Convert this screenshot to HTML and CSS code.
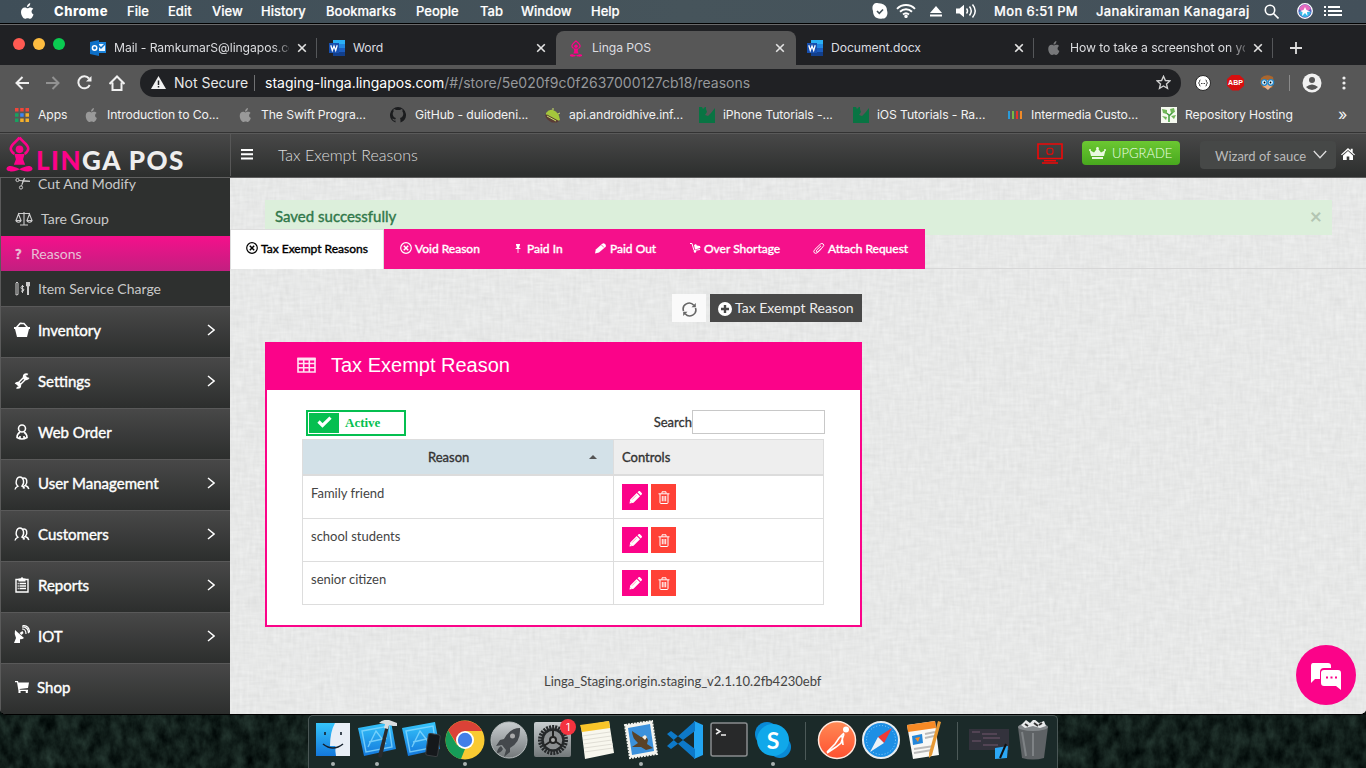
FILE: index.html
```html
<!DOCTYPE html>
<html lang="en">
<head>
<meta charset="utf-8">
<title>Linga POS</title>
<link rel="stylesheet" href="styles.css">
</head>
<body>
<svg class="defs" width="0" height="0">
  <defs>
    <symbol id="apple" viewBox="0 0 14 17"><path d="M9.900 0c.1 1.400-.4 2.500-1.100 3.200-.7.800-1.700 1.200-2.400 1.100-.1-1.200.4-2.200 1.100-2.900C8.200.6 9.200.1 9.900 0zM13.500 12.200c-.8 2.300-2.200 4.700-3.700 4.700-1 0-1.500-.6-2.700-.6s-1.800.6-2.700.6C2.400 16.900 0 13 0 9.600 0 6.500 2 4.700 4 4.700c1.200 0 2.200.8 3 .8.700 0 1.900-.9 3.400-.8 1 .1 2.100.5 2.800 1.500-2.700 1.800-2.200 5 .3 6z"/></symbol>
    <symbol id="close" viewBox="0 0 10 10"><path d="M1.200 1.200l7.600 7.600M8.800 1.200L1.200 8.800" stroke="currentColor" stroke-width="1.600" fill="none"/></symbol>
    <symbol id="word" viewBox="0 0 16 16"><path d="M4 0h12v16H4z" fill="#1a5dbe"/><path d="M4 0h12v4H4z" fill="#2bb0f5"/><path d="M4 4h12v4H4z" fill="#2186e0"/><path d="M4 12h12v4H4z" fill="#123f8c"/><path d="M0 3h10v10H0z" fill="#174fae"/><path d="M1.800 5.300l1.500 5.200L5 6l1.700 4.500 1.500-5.200" stroke="#fff" stroke-width="1.300" fill="none"/></symbol>
    <symbol id="guru" viewBox="0 0 26 35"><path d="M13 1.500C10 6 4.500 7.500 4.500 12.500c0 2 1.500 3.500 3.500 5M13 1.500c3 4.500 8.500 6 8.500 11 0 2-1.500 3.500-3.500 5" fill="none" stroke="currentColor" stroke-width="2.500"/><circle cx="13" cy="13" r="3.700" fill="currentColor"/><path d="M8 17.500h10l-1.500 5 2 5.500h-11l2-5.500z" fill="currentColor"/><path d="M.5 31c2-3.500 7-1.500 12.500 1 5.500-2.500 10.500-4.500 12.500-1 .8 2.700-2 3.500-5 3.500-3.500 0-5-1.200-7.500-2-2.500.8-4 2-7.500 2-3 0-5.800-.8-5-3.500z" fill="currentColor"/></symbol>
    <symbol id="tuts" viewBox="0 0 16 16"><path d="M0 0h3l1 2 2-2h1v2l1 3-2 3 3 1 3-3 4-5v15H0z" fill="#087443"/></symbol>
    <symbol id="chev" viewBox="0 0 8 12"><path d="M1 1l6 5-6 5" fill="none" stroke="#fff" stroke-width="1.500"/></symbol>
    <symbol id="xcircle" viewBox="0 0 12 12"><circle cx="6" cy="6" r="5.300" fill="none" stroke="currentColor" stroke-width="1.200"/><path d="M3.800 3.800l4.400 4.400M8.200 3.800L3.800 8.200" stroke="currentColor" stroke-width="1.500"/></symbol>
    <symbol id="users" viewBox="0 0 16 14"><path d="M1 13.500q.3-2 3-3.300C.5 7.500 2.500 1 6 1s5 6 2 9q2 .8 2.500 2.500" fill="none" stroke="#fff" stroke-width="1.400"/><path d="M9 2.200c4-1.400 5 4.500 2.300 7.300q3 1 3.500 3.500M9.500 12.500q-.5-2 1-3" fill="none" stroke="#fff" stroke-width="1.500"/></symbol>
    <symbol id="pencil" viewBox="0 0 13 13"><path d="M.5 12.500l.7-4L7.700 2l3.300 3.300-6.500 6.500zM8.500 1.300L9.600.3c.5-.4 1-.4 1.400 0l1.700 1.700c.4.400.4 1 0 1.400l-1 1z" fill="#fff"/><path d="M3 8.700l4.500-4.500M1.500 10.500l1 1" stroke="#f8a" stroke-width=".8"/></symbol>
    <symbol id="trash" viewBox="0 0 12 13"><path d="M.5 2.800h11M4 2.500V.8h4v1.700M2 3v8.500q0 1 1 1h6q1 0 1-1V3M4.300 5v5.300M6 5v5.300M7.700 5v5.300" fill="none" stroke="#fff" stroke-width="1"/></symbol>
    <linearGradient id="blue" x2="0" y2="1"><stop stop-color="#35c5fb"/><stop offset="1" stop-color="#1478dc"/></linearGradient>
    <linearGradient id="silver" x2="0" y2="1"><stop stop-color="#c9ced0"/><stop offset="1" stop-color="#73787a"/></linearGradient>
    <linearGradient id="orange" x2="0" y2="1"><stop stop-color="#ff8a55"/><stop offset="1" stop-color="#ff5030"/></linearGradient>
    <symbol id="blueprint" viewBox="0 0 40 40"><path d="M1 8l33-6 5 27-32 7z" fill="url(#blue)"/><path d="M5 11l27-5 3 21-26 5zM11 27l8-16 10 13M12 22l18-4" fill="none" stroke="#8edcff" stroke-width="1.400" opacity=".75"/></symbol>
    <filter id="linen" x="0" y="0" width="100%" height="100%" color-interpolation-filters="sRGB"><feTurbulence type="fractalNoise" baseFrequency="0.3 0.06" numOctaves="2" seed="3" result="a"/><feTurbulence type="fractalNoise" baseFrequency="0.06 0.3" numOctaves="2" seed="8" result="b"/><feComposite in="a" in2="b" operator="arithmetic" k2=".5" k3=".5"/><feColorMatrix values=".1 0 0 0 .855  .1 0 0 0 .859  .1 0 0 0 .857  0 0 0 0 1"/></filter>
    <filter id="forest" x="0" y="0" width="100%" height="100%" color-interpolation-filters="sRGB"><feTurbulence type="fractalNoise" baseFrequency="0.09 0.06" numOctaves="4" seed="12"/><feColorMatrix values=".2 0 0 0 -.03  .26 0 0 0 -.01  .23 0 0 0 -.01  0 0 0 0 1"/></filter>
  </defs>
</svg>

<header class="menubar">
  <svg class="m-apple" width="13" height="16" fill="#fff"><use href="#apple"/></svg>
  <b>Chrome</b><span>File</span><span>Edit</span><span>View</span><span>History</span><span>Bookmarks</span><span>People</span><span>Tab</span><span>Window</span><span>Help</span>
  <svg width="16" height="16" viewBox="0 0 16 16"><path d="M4 0c2-.2 3 .5 5 .6C13 1.500 15 4 15 7.500c1.500 4-1 8.500-4.500 8C4 16.500 1 13 1 8-.5 4 1 .5 4 0z" fill="#fff"/><path d="M5 8l2.300 2.300L11 6.500" fill="none" stroke="#44525a" stroke-width="1.600"/></svg>
  <svg width="20" height="14" viewBox="0 0 20 14" fill="none" stroke="#fff" stroke-width="1.900"><path d="M1 4.800C6-.2 14-.2 19 4.800M4 7.800c3.500-3.400 8.500-3.400 12 0M7 10.500c2-1.700 4-1.700 6 0"/><circle cx="10" cy="12.300" r=".8" fill="#fff"/></svg>
  <svg width="12" height="11" viewBox="0 0 12 11" fill="#fff"><path d="M6 0l6 7H0zM0 8.500h12v2H0z"/></svg>
  <svg width="21" height="14" viewBox="0 0 21 14"><path d="M0 4.500h3.500L8 .8v12.400L3.500 9.500H0z" fill="#fff"/><path d="M10.500 4.500q2 2.500 0 5M13.500 2.500q3.500 4.500 0 9M16.500 .5q5.500 6.500 0 13" fill="none" stroke="#fff" stroke-width="1.500"/></svg>
  <span class="clock">Mon 6:51 PM</span><span class="user">Janakiraman Kanagaraj</span>
  <svg width="15" height="15" viewBox="0 0 15 15" fill="none" stroke="#fff" stroke-width="1.600"><circle cx="6" cy="6" r="4.700"/><path d="M9.500 9.500l5 5"/></svg>
  <svg width="16" height="16" viewBox="0 0 16 16"><circle cx="8" cy="8" r="7.300" fill="#5560b8" stroke="#fff" stroke-width="1.300"/><path d="M2 6q2-4.500 6-4.500T14 6l-4 2H5z" fill="#e66abf"/><path d="M2 9l5-1 7 1q-2 5-6 5t-6-5z" fill="#35b9e8"/><path d="M8 4l1.500 3 4 1.500-3.500.5.500 4L8 10l-3 3 .5-4L3 8l3.500-1z" fill="#fff"/></svg>
  <svg width="19" height="12" viewBox="0 0 19 12" fill="#fff"><path d="M0 1h2v2H0zM0 5h2v2H0zM0 9h2v2H0zM4 1h12v2H4zM4 5h14v2H4zM4 9h14v2H4z"/></svg>
</header>

<div class="window">
  <nav class="tabstrip">
    <div class="lights"><i class="red"></i><i class="yellow"></i><i class="green"></i></div>
    <div class="btab sep"><svg width="16" height="16" viewBox="0 0 16 16"><path d="M7 2h9v11H7z" fill="#1b83da"/><path d="M8 4h7v7H8z" fill="#e8f4ff"/><path d="M8 5l3 3 5-5" stroke="#1272c8" stroke-width="1.500" fill="none"/><path d="M0 2l9-2v16l-9-2z" fill="#0e70c8"/><circle cx="4.600" cy="8" r="2.200" fill="none" stroke="#fff" stroke-width="1.500"/></svg><span class="fade">Mail - RamkumarS@lingapos.co</span><svg class="x"><use href="#close"/></svg></div>
    <div class="btab"><svg width="16" height="16"><use href="#word"/></svg><span>Word</span><svg class="x"><use href="#close"/></svg></div>
    <div class="btab on"><svg class="pink" width="16" height="17"><use href="#guru"/></svg><span>Linga POS</span><svg class="x"><use href="#close"/></svg></div>
    <div class="btab sep"><svg width="16" height="16"><use href="#word"/></svg><span>Document.docx</span><svg class="x"><use href="#close"/></svg></div>
    <div class="btab sep"><svg width="16" height="14" fill="#77787a"><use href="#apple"/></svg><span class="fade">How to take a screenshot on yo</span><svg class="x"><use href="#close"/></svg></div>
    <svg class="plus" width="12" height="12" viewBox="0 0 12 12"><path d="M6 0v12M0 6h12" stroke="#e0e0e0" stroke-width="1.800"/></svg>
  </nav>

  <div class="toolbar">
    <svg width="14" height="14" viewBox="0 0 14 14" class="ln"><path d="M14 7H1.500M7.500 1L1.500 7l6 6"/></svg>
    <svg width="14" height="14" viewBox="0 0 14 14" class="ln dim"><path d="M0 7h12.500M6.500 1l6 6-6 6"/></svg>
    <svg width="15" height="15" viewBox="0 0 15 15" class="ln"><path d="M12.700 10A6 6 0 1 1 12 3.500"/><path d="M14.500 1v5.500H9z" fill="#f0f0f0" stroke="none"/></svg>
    <svg width="16" height="16" viewBox="0 0 16 16" class="ln"><path d="M.5 9L8 1.500 15.500 9M3.500 7.500V15h9V7.500"/></svg>
    <div class="omnibox">
      <svg width="15" height="13" viewBox="0 0 15 13"><path d="M7.500 0L15 13H0z" fill="#f1f1f1"/><path d="M7.500 4.500V9M7.500 10v1.500" stroke="#202124" stroke-width="1.500"/></svg>
      <span class="ns">Not Secure</span><i></i><span class="url"><em>staging-linga.lingapos.com</em>/#/store/5e020f9c0f2637000127cb18/reasons</span>
      <svg class="star" width="15" height="15" viewBox="0 0 15 15"><path d="M7.500 1.300l1.900 4.200 4.500.4-3.400 3 1 4.500-4-2.400-4 2.400 1-4.500-3.400-3 4.500-.4z" fill="none" stroke="#d0d0d0" stroke-width="1.400"/></svg>
    </div>
    <div class="exts">
    <svg width="16" height="16" viewBox="0 0 16 16"><circle cx="8" cy="8" r="7.500" fill="#fff" stroke="#292929"/><path d="M5.500 5Q4 5 4.500 6.800L3.500 8l1 1.200Q4 11 5.500 11M10.500 5q1.500 0 1 1.800l1 1.200-1 1.200q.5 1.800-1 1.800M6 8.500h1M7.500 8.500h1M9 8.500h1" fill="none" stroke="#444"/></svg>
    <div class="abp">ABP</div>
    <svg width="15" height="15" viewBox="0 0 15 15"><path d="M1 3q5-5 12-1l1 6-2 5H3L0 8z" fill="#a9662e"/><path d="M3 5h9v6l-4 4-5-4z" fill="#eab28b"/><circle cx="4.200" cy="7.500" r="2.800" fill="#dff4ff" stroke="#2387cb" stroke-width="1.300"/><circle cx="10.800" cy="7.500" r="2.800" fill="#dff4ff" stroke="#2387cb" stroke-width="1.300"/><circle cx="4.500" cy="7.500" r=".9"/><circle cx="10.500" cy="7.500" r=".9"/></svg>
    <i class="vsep"></i>
    <svg width="20" height="20" viewBox="0 0 20 20"><circle cx="10" cy="10" r="9.500" fill="#f1f1f1"/><circle cx="10" cy="7" r="3" fill="#575757"/><path d="M4 14q6-5 12 0-2.500 3-6 3t-6-3z" fill="#575757"/></svg>
    <svg class="dots" width="4" height="14" viewBox="0 0 4 14" fill="#eee"><circle cx="2" cy="2" r="1.600"/><circle cx="2" cy="7" r="1.600"/><circle cx="2" cy="12" r="1.600"/></svg>
    </div>
  </div>

  <div class="bookmarks">
    <svg width="14" height="14" viewBox="0 0 14 14"><path d="M0 0h3.500v3.500H0zM5.200 0h3.500v3.500H5.200zM10.500 0H14v3.500h-3.500z" fill="#f2463a"/><path d="M0 5.200h3.500v3.500H0zM0 10.500h3.500V14H0z" fill="#18a260"/><path d="M5.200 5.200h3.500v3.500H5.200z" fill="#3e86f5"/><path d="M10.500 5.200H14v3.500h-3.500zM5.200 10.500h3.500V14H5.200zM10.500 10.500H14V14h-3.500z" fill="#f5b02a"/></svg><span>Apps</span>
    <svg width="13" height="14" fill="#999"><use href="#apple"/></svg><span>Introduction to Co...</span>
    <svg width="13" height="14" fill="#999"><use href="#apple"/></svg><span>The Swift Progra...</span>
    <svg width="16" height="16" viewBox="0 0 16 16"><path d="M8 0a8 8 0 0 0-2.500 15.600v-2c-2 .5-2.500-1-3.500-1.800 1.500-.3 1.800 1 3.500.5q0-1 .5-1.300C2.500 10.500 2 6 3.600 4.500q-.3-1.500.2-2.500Q5 2 6 3h4q1-1 2.200-1 .5 1 .2 2.500C14 6 13.500 10.500 10 11q.5.500.5 4.600A8 8 0 0 0 8 0z" fill="#1b1c1e"/></svg><span>GitHub - duliodeni...</span>
    <svg width="16" height="16" viewBox="0 0 16 16"><path d="M1 6Q4 2 8 3q6 2 7 10l-2 1L1 8z" fill="#a4c63c"/><path d="M0 8l2-.5L14 14l-2 1.500H7Q1 13 0 8z" fill="#5a3c35"/><path d="M8 3V1M13 7l2-1M2 9l9 5" stroke="#cde36b"/></svg><span>api.androidhive.inf...</span>
    <svg width="16" height="16"><use href="#tuts"/></svg><span>iPhone Tutorials -...</span>
    <svg width="16" height="16"><use href="#tuts"/></svg><span>iOS Tutorials - Ra...</span>
    <svg width="14" height="8" viewBox="0 0 14 8"><path d="M0 0h2v8H0z" fill="#2b9bd8"/><path d="M4 0h2v8H4z" fill="#78b943"/><path d="M8 0h2v8H8z" fill="#e63329"/><path d="M12 0h2v8h-2z" fill="#f08a28"/></svg><span>Intermedia Custo...</span>
    <svg width="16" height="16" viewBox="0 0 16 16"><path d="M0 0h16v16H0z" fill="#f5f9ef"/><path d="M8 15V8L4 5M8 9l5-5" stroke="#3f9a3a" stroke-width="1.500" fill="none"/><path d="M1 2l5 1v4L2 6zM9 2l4-1 1 4-4 1zM1 9l5 1-1 3zM10 9l5-1-2 4z" fill="#71b658"/></svg><span>Repository Hosting</span>
    <span class="more">»</span>
  </div>

  <div class="apphead">
    <div class="brand"><svg class="pink" width="27" height="36"><use href="#guru"/></svg><span class="name"><b>LIN</b>GA POS</span></div>
    <svg class="burger" width="12" height="11" viewBox="0 0 12 11" fill="#fff"><path d="M0 0h12v2H0zM0 4.300h12v2H0zM0 8.600h12v2H0z"/></svg>
    <h1>Tax Exempt Reasons</h1>
    <svg class="monitor" width="26" height="21" viewBox="0 0 26 21" fill="none" stroke="#f00808" stroke-width="1.600"><path d="M1 1h24v14.500H1zM5 20h16M7 17.700h12"/><rect x="10" y="5.200" width="6" height="6" rx="2" stroke-width="1.100"/></svg>
    <div class="upgrade"><svg width="17" height="12" viewBox="0 0 17 12" fill="#eafadf"><path d="M2 9L.5 3 5 5.500 8.500 1 12 5.500 16.500 3 15 9zM3 10h11v2H3z"/><circle cx="8.500" cy="1.300" r="1.300"/><circle cx="1" cy="3" r="1"/><circle cx="16" cy="3" r="1"/></svg><span>UPGRADE</span></div>
    <div class="store"><span>Wizard of sauce</span><svg width="14" height="9" viewBox="0 0 14 9"><path d="M.8 1L7 7.800 13.200 1" fill="none" stroke="#ddd" stroke-width="1.300"/></svg></div>
    <svg class="home" width="14" height="12" viewBox="0 0 14 12" fill="#fff"><path d="M7 0l2.700 2.500V.8h2v3.600L14 6.500l-.8.800L7 1.900.8 7.300 0 6.500zM7 3l5 4.400V12H8.300V8.500H5.700V12H2V7.400z"/></svg>
  </div>

  <div class="body">
    <aside>
      <div class="sub cut"><svg width="15" height="13" viewBox="0 0 15 13" fill="none" stroke="#ccc"><circle cx="2.500" cy="3" r="1.600"/><circle cx="6" cy="10.500" r="1.600"/><path d="M4 3.500l11 .8-8-.3M6.500 9L9.500 1 7 7"/></svg><span>Cut And Modify</span></div>
      <div class="sub tare"><svg width="18" height="15" viewBox="0 0 18 15" fill="none" stroke="#ccc" stroke-width="1.100"><path d="M9 1v13M5 14h8M3 2.500h12M3.500 3L1 9.500h5zM14.500 3L12 9.500h5zM1 10q2.500 2.500 5 0M12 10q2.500 2.500 5 0"/></svg><span>Tare Group</span></div>
      <div class="sub sel"><strong>?</strong><span>Reasons</span></div>
      <div class="sub svc"><svg width="15" height="15" viewBox="0 0 15 15" fill="none" stroke="#ccc"><path d="M1 14V2q1-2 2 0v11.500zM11.500 1v4h3V1M13 1v13" /><path d="M11 1h4v4h-4zM12 5h2v9h-2z" fill="#ccc" stroke="none"/><path d="M9 5.500Q6 4.500 6 6.500t2 1.500 0 2.500l-2-.5M7.500 4v8"/></svg><span>Item Service Charge</span></div>
      <div class="grp"><svg width="16" height="15" viewBox="0 0 16 15"><path d="M0 5h16v2h-1l-2 8H3L1 7H0z" fill="#fff"/><path d="M2.500 5.500L6 1.500h4l3.500 4M6 1.500L7.500 1" fill="none" stroke="#fff" stroke-width="1.500"/></svg><span>Inventory</span><svg class="chev"><use href="#chev"/></svg></div>
      <div class="grp"><svg width="16" height="16" viewBox="0 0 16 16"><path d="M3.500 12.500l9-9" stroke="#fff" stroke-width="4"/><path d="M5 11l6-6" stroke="#3a3b3b" stroke-width="1.200"/><circle cx="3.700" cy="12.300" r="2.500" fill="none" stroke="#fff" stroke-width="2" stroke-dasharray="12 4" stroke-dashoffset="-9"/><circle cx="12.300" cy="3.700" r="2.500" fill="none" stroke="#fff" stroke-width="2" stroke-dasharray="12 4" stroke-dashoffset="-1"/></svg><span>Settings</span><svg class="chev"><use href="#chev"/></svg></div>
      <div class="grp"><svg width="16" height="16" viewBox="0 0 16 16" fill="none" stroke="#fff" stroke-width="1.600"><circle cx="8" cy="4.500" r="3.500"/><path d="M6 8Q3 10 3 13.500q5 3 10 0Q13 10 10 8M6 15v-3M10 15v-3"/></svg><span>Web Order</span></div>
      <div class="grp"><svg width="16" height="14"><use href="#users"/></svg><span>User Management</span><svg class="chev"><use href="#chev"/></svg></div>
      <div class="grp"><svg width="16" height="14"><use href="#users"/></svg><span>Customers</span><svg class="chev"><use href="#chev"/></svg></div>
      <div class="grp"><svg width="16" height="16" viewBox="0 0 16 16"><path d="M2 2.500h12V15H2zM5.500 6.500H12M5.500 9H12M5.500 11.500H12M3.700 6.500h1M3.700 9h1M3.700 11.500h1" fill="none" stroke="#fff" stroke-width="1.400"/><path d="M4.500 1.500h2Q8-1 9.500 1.500h2v3h-7z" fill="#fff"/></svg><span>Reports</span><svg class="chev"><use href="#chev"/></svg></div>
      <div class="grp iot"><svg width="16" height="18" viewBox="0 0 16 18"><path d="M1 5l9 8q-2 1.500-4 1.200V18H0l2-5Q0 9 1 5zM5.500 8l3-2 1 2-2 2z" fill="#fff"/><path d="M8 4q4 0 4 5M8 1.800q6.500 0 6.500 6.500M8.500.5q7 0 7 7" fill="none" stroke="#fff" stroke-width="1.200"/></svg><span>IOT</span><svg class="chev"><use href="#chev"/></svg></div>
      <div class="grp shop"><svg width="14" height="12" viewBox="0 0 14 12" fill="#fff"><path d="M0 0h3l.4 1.500H14L13 7 4.500 8l.3.8H13V10H3.500L2 1.200H0z"/><circle cx="4.500" cy="11" r="1.200"/><circle cx="11.800" cy="11" r="1.200"/></svg><span>Shop</span></div>
    </aside>

    <main>
      <svg class="texture"><rect width="100%" height="100%" filter="url(#linen)"/></svg>
      <div class="content">
        <div class="alert"><span>Saved successfully</span><b>×</b></div>
        <div class="tabs">
          <div class="tab active"><svg width="12" height="12"><use href="#xcircle"/></svg><span>Tax Exempt Reasons</span></div>
          <div class="tab"><svg width="12" height="12"><use href="#xcircle"/></svg><span>Void Reason</span></div>
          <div class="tab pin"><svg width="6" height="9" viewBox="0 0 6 9" fill="#fff"><path d="M1 0h4v1L4 3.500l1.500 1V5h-5v-.5L2 3.500 1 1zM2.600 5h.8v4h-.8z"/></svg><span>Paid In</span></div>
          <div class="tab out"><svg width="11" height="11" viewBox="0 0 11 11"><path d="M0 10.500l.8-4L7 1q1.500-1.300 3 0t.5 3L4 9.500z" fill="#fff"/><path d="M6.500 2L9 4.500" stroke="#f5108b" stroke-width=".7"/></svg><span>Paid Out</span></div>
          <div class="tab over"><svg width="11" height="10" viewBox="0 0 11 10"><path d="M0 .5h2l2 7 6-1" stroke="#fff" fill="none"/><path d="M4 2l2-1 .8 1.500L10 3l.5 2-5.500 1.500z" fill="#fff"/><circle cx="5" cy="8.500" r="1.200" fill="#fff"/></svg><span>Over Shortage</span></div>
          <div class="tab clip"><svg width="12" height="11" viewBox="0 0 12 11"><path d="M8 2.800L3.600 7.200q-.8 1 0 1.500t1.500-.2L10 3.800q1.500-1.500.2-2.800t-2.900.2L1.800 6.500q-1.800 2-.5 3.300t3.400-.4L8.500 5.800" fill="none" stroke="#fff" stroke-width="1"/></svg><span>Attach Request</span></div>
        </div>
        <div class="actions">
          <div class="refresh"><svg width="15" height="15" viewBox="0 0 15 15"><path d="M1.500 9A6 6 0 0 1 11.800 3.300M13.500 6A6 6 0 0 1 3.200 11.700" fill="none" stroke="#666" stroke-width="1.600"/><path d="M13.800 1v4.300H9.500zM1.200 14V9.700h4.300z" fill="#666"/></svg></div>
          <div class="add"><svg width="14" height="14" viewBox="0 0 14 14"><circle cx="7" cy="7" r="7" fill="#fff"/><path d="M7 3v8M3 7h8" stroke="#484848" stroke-width="2.400"/></svg><span>Tax Exempt Reason</span></div>
        </div>
        <section class="panel">
          <h2><svg width="19" height="16" viewBox="0 0 19 16"><path d="M1 1.500h17v13.500H1zM1 6.500h17M1 10.700h17M6.700 3v12M12.300 3v12" fill="none" stroke="#ffe3f2" stroke-width="1.600"/><path d="M.5 .7h18v2.800H.5z" fill="#ffe3f2"/></svg><span>Tax Exempt Reason</span></h2>
          <div class="tools">
            <div class="toggle"><div><svg width="15" height="12" viewBox="0 0 15 12"><path d="M1.500 5.500l4 4L13.500 1.700" fill="none" stroke="#fff" stroke-width="3.200"/></svg></div><span>Active</span></div>
            <div class="search"><label>Search</label><div class="box"></div></div>
          </div>
          <div class="table">
            <div class="th reason"><span>Reason</span><svg width="8" height="4" viewBox="0 0 8 4"><path d="M4 0l4 4H0z" fill="#555"/></svg></div><div class="th ctl">Controls</div>
            <div class="td">Family friend</div><div class="td btns"><i class="ed"><svg width="13" height="13"><use href="#pencil"/></svg></i><i class="del"><svg width="12" height="13"><use href="#trash"/></svg></i></div>
            <div class="td">school students</div><div class="td btns"><i class="ed"><svg width="13" height="13"><use href="#pencil"/></svg></i><i class="del"><svg width="12" height="13"><use href="#trash"/></svg></i></div>
            <div class="td">senior citizen</div><div class="td btns"><i class="ed"><svg width="13" height="13"><use href="#pencil"/></svg></i><i class="del"><svg width="12" height="13"><use href="#trash"/></svg></i></div>
          </div>
        </section>
        <footer><span>Linga_Staging.origin.staging_v2.1.10.2fb4230ebf</span></footer>
      </div>
      <div class="chat"><svg width="32" height="28" viewBox="0 0 32 28"><path d="M3 0h15q3 0 3 3v2h-7q-4 0-4 4v7H5l-4 4V3q0-3 2-3z" fill="#fff"/><path d="M14 7h14q3 0 3 3v17l-5-4H14q-3 0-3-3V10q0-3 3-3z" fill="#fff"/><path d="M16 14.500h2M20.500 14.500h2M25 14.500h2" stroke="#fb0389" stroke-width="2"/></svg></div>
    </main>
  </div>
</div>

<div class="desktop">
  <svg class="texture"><rect width="100%" height="100%" filter="url(#forest)"/></svg>
  <div class="dock">
    <div class="app run"><svg viewBox="0 0 40 40"><path d="M3 3h34v33H3z" fill="url(#blue)"/><path d="M22 3h15v33H23q-1-5-.5-10H17q0-14 5-23z" fill="#e8eef6"/><path d="M12 12v3M28 12v3M10 24q10 8 20 0" fill="none" stroke="#14202c" stroke-width="1.600"/></svg></div>
    <div class="app run"><svg viewBox="0 0 40 40"><use href="#blueprint"/><path d="M29 5l3 1-7 31q-2 2-4-1z" fill="#2a2c2e"/><path d="M22 3q4-4 10-3l8 3v3h-4l-4-1-1 4-4-1 1-4z" fill="#d9dddf"/></svg></div>
    <div class="app"><svg viewBox="0 0 40 40"><use href="#blueprint"/><rect x="26" y="14" width="12" height="22" rx="2" transform="rotate(8 32 25)" fill="#15181b" stroke="#3b3e42"/></svg></div>
    <div class="app run"><svg viewBox="0 0 40 40"><circle cx="20" cy="20" r="19.500" fill="#f9ca32"/><path d="M3.100 10.300A19.500 19.500 0 0 1 37 11H20l-8 13z" fill="#db4237"/><path d="M3.100 10.300L12 25l8 4-4 10.100A19.500 19.500 0 0 1 3.100 10.300z" fill="#169c58"/><circle cx="20" cy="20" r="9" fill="#fff"/><circle cx="20" cy="20" r="7.200" fill="#427fe8"/></svg></div>
    <div class="app"><svg viewBox="0 0 40 40"><circle cx="20" cy="20" r="18" fill="url(#silver)" stroke="#b5babb"/><path d="M31 8q-10 0-16 11l-4 1-4 6 6-1 4 5-2 7 6-5v-4Q32 22 31 8z" fill="#44484c"/><circle cx="23.500" cy="16" r="2.500" fill="#aaa"/><path d="M12 26q-4 3-4 7 4 0 6-4z" fill="#44484c"/></svg></div>
    <div class="app settings"><svg viewBox="0 0 40 40"><rect x="1" y="2" width="37" height="35" rx="2" fill="url(#silver)"/><circle cx="20" cy="20" r="13" fill="#8b8e90" stroke="#25282a" stroke-width="4" stroke-dasharray="2 1"/><circle cx="20" cy="20" r="10.500" fill="none" stroke="#25282a" stroke-width="2.500"/><circle cx="20" cy="20" r="3" fill="#aaa" stroke="#222" stroke-width="2"/><path d="M20 17V10M22.500 21.500l6 4M17.500 21.500l-6 4" stroke="#222" stroke-width="2"/></svg><b>1</b></div>
    <div class="app"><svg viewBox="0 0 40 40"><path d="M4 6l28-5 5 32-29 6z" fill="#f8f7ee"/><path d="M3 5l29-4 1 7-28 4z" fill="#f9c529"/><path d="M5 16l28-4M6 20l28-4M6 24l29-4M7 28l29-4M7 32l29-4" stroke="#e0ded5"/></svg></div>
    <div class="app run"><svg viewBox="0 0 40 40"><path d="M4 5l27-4 5 33-27 4z" fill="#f4f4ef" stroke="#f4f4ef" stroke-width="2" stroke-dasharray="2 1"/><path d="M7 8l22-4 4 27-22 4z" fill="#3b91dc"/><path d="M11 11l9 6 5-1 2 4-1 4 6 4-7 2-5-3-9 0 6-4q-6-5-6-12z" fill="#5a4228"/><path d="M21 17l3-2 2 2-2 3z" fill="#f5eee0"/></svg></div>
    <div class="app"><svg viewBox="0 0 40 40"><path d="M29 1l9 4v30l-9 4V1z" fill="#22a6f2"/><path d="M2 14l4-3 24 18v10zM2 26l4 3 24-18V1z" fill="#0d79c8"/></svg></div>
    <div class="app"><svg viewBox="0 0 40 40"><rect x="2" y="3" width="36" height="33" rx="2" fill="#28292a" stroke="#898c8e" stroke-width="1.500"/><path d="M7 9l4 2.500L7 14M12 15h5" fill="none" stroke="#eee" stroke-width="1.500"/></svg></div>
    <div class="app run"><svg viewBox="0 0 40 40"><circle cx="14" cy="14" r="12" fill="#0989d5"/><circle cx="27" cy="27" r="11" fill="#0989d5"/><circle cx="20" cy="20" r="16" fill="#10a8ea"/></svg><strong>S</strong></div>
    <i class="dsep"></i>
    <div class="app"><svg viewBox="0 0 40 40"><circle cx="20" cy="20" r="18.500" fill="url(#orange)" stroke="#ffe9df" stroke-width="1.500"/><circle cx="29" cy="9.500" r="3" fill="#fff"/><path d="M27 13l-5 5-4 6-8 8M27 14l-3 9-5 4-9 6M25 16l1 9" fill="none" stroke="#fff" stroke-width="1.600"/></svg></div>
    <div class="app"><svg viewBox="0 0 40 40"><circle cx="20" cy="20" r="18" fill="#1d8fe5" stroke="#e8ecef" stroke-width="2"/><circle cx="20" cy="20" r="14.500" fill="none" stroke="#8ad0ff" stroke-dasharray="1 2"/><path d="M31 8L23 23l-6-6z" fill="#ef3937"/><path d="M9 32l8-15 6 6z" fill="#edf2f7"/></svg></div>
    <div class="app"><svg viewBox="0 0 40 40"><path d="M2 5l28-4 4 34-26 4z" fill="#f8f8f6"/><path d="M2 5l28-4 1 7-28 4z" fill="#f78a25"/><path d="M7 16l10-2 1 9-10 2z" fill="#2386d9"/><path d="M10 18l5-1-2 5z" fill="#f78a25"/><path d="M20 14l10-2M20 18l9-2M9 29l20-3M9 33l18-3" stroke="#bbb" stroke-width="2"/><path d="M33 1l3 1-9 33-3 3v-5z" fill="#e79935"/></svg></div>
    <i class="dsep"></i>
    <div class="app"><svg viewBox="0 0 40 40"><path d="M0 9h40v21H0z" fill="#33323c"/><path d="M3 12h8M13 14h15M14 18h17M3 21h9M14 25h15" stroke="#72576c" stroke-width="1"/><path d="M26 28l13-2-1 12-12 1z" fill="#2ca8f5"/><path d="M37 24l-6 14" stroke="#111" stroke-width="2"/></svg></div>
    <div class="app"><svg viewBox="0 0 40 40"><path d="M5 7h30l-4 31q-11 3-22 0z" fill="#5e6265"/><path d="M9 12l4 24M20 13v23" stroke="#7e8285" stroke-width="2"/><ellipse cx="20" cy="7" rx="15" ry="4" fill="#83888b"/><path d="M8 5l5-5 4 3 4-4 5 4 5-2 2 5-6 2-7-2-8 2z" fill="#e8eaeb"/><path d="M12 4l3 2M21 3l4 3M29 3l-3 2" stroke="#333" stroke-width="2"/></svg></div>
  </div>
</div>
</body>
</html>
```
FILE: styles.css
```css
* { box-sizing: border-box; }
body { margin: 0; width: 1366px; height: 768px; overflow: hidden; background: #08110f; font-family: Lato, sans-serif; display: flex; flex-direction: column; }
svg { flex: none; display: block; }
i, em { font-style: normal; }
.defs { position: absolute; }
span { white-space: nowrap; }
.pink { color: #fb0389; }

.menubar { height: 23px; flex: none; display: grid; align-items: center; grid-template-columns: 54px 73px 41px 44px 49px 65px 90px 64px 41px 70px 281px 24px 34px 26px 38px 102px 168px 33px 27px 30px; background: linear-gradient(90deg, #3f4e58, #46545b 50%, #43505a); color: #fff; font: 500 13px Inter, sans-serif; padding-bottom: 1px; }
.menubar .m-apple { margin-left: 21px; }
.menubar b { font-weight: 800; letter-spacing: .5px; }
.menubar span { -webkit-text-stroke: .2px #fff; }
.clock { letter-spacing: .35px; }
.user { letter-spacing: .38px; }

.window { height: 692px; flex: none; border-top: 1px solid #000; border-bottom: 1px solid #000; background: #575757; border-radius: 0 0 6px 6px; overflow: hidden; }
.tabstrip { height: 41px; display: flex; background: #202124; border-top: 1px solid #6a6a6b; font: 12.200px Inter, sans-serif; letter-spacing: -.08px; color: #dcdde0; }
.lights { width: 78px; flex: none; display: flex; gap: 8px; padding: 13px 0 0 13px; }
.lights i { width: 12px; height: 12px; border-radius: 50%; }
.red { background: #ff5a52; } .yellow { background: #fdbc40; } .green { background: #0acb51; }
.btab { width: 239px; flex: none; height: 34px; margin-top: 6px; padding-left: 12px; display: flex; align-items: center; gap: 8px; }
.btab span { width: 175px; flex: none; margin-top: -1px; }
.btab .fade { -webkit-mask-image: linear-gradient(90deg, #000 90%, transparent 105%); mask-image: linear-gradient(90deg, #000 90%, transparent 105%); }
.x { width: 10px; height: 10px; color: #e3e3e3; }
.on { width: 240px; margin-right: -1px; background: #575757; border-radius: 8px 8px 0 0; }
.sep { border-right: 1px solid #55575a; height: 20px; margin-top: 13px; }
.plus { margin: 17px 0 0 17px; }

.toolbar { height: 35px; display: flex; align-items: center; padding-left: 15px; gap: 17px; }
.ln { fill: none; stroke: #f0f0f0; stroke-width: 2; }
.dim { stroke: #929292; }
.omnibox { margin-left: -2px; width: 1041px; height: 28px; border-radius: 14px; background: #202124; display: flex; align-items: center; padding: 0 10px 0 11px; font: 14px Inter, sans-serif; color: #e8e8e8; }
.ns { width: 83px; padding-left: 8px; }
.omnibox i { width: 1px; height: 16px; background: #707173; margin: 0 10px 0 5px; }
.url { color: #96989b; flex: 1; } .url em { color: #fff; }
.exts { display: flex; align-items: center; gap: 16px; margin-left: -3px; }
.exts .vsep { margin: 0 -4px 0 -2px; }
.exts .dots { margin-left: 4px; }
.abp { width: 17px; height: 16px; background: #d70f0f; color: #fff; font: bold 7px/16px "Liberation Sans", sans-serif; text-align: center; clip-path: polygon(30% 0, 70% 0, 100% 30%, 100% 70%, 70% 100%, 30% 100%, 0 70%, 0 30%); }
.vsep { width: 1px; height: 16px; background: #8a8a8a; }
.bookmarks { height: 33px; padding-bottom: 3px; display: grid; align-items: center; padding-left: 15px; grid-template-columns: 23px 47px 22px 132px 22px 129px 25px 130px 24px 130px 24px 130px 24px 131px 23px 130px 24px 153px 20px; font: 12.200px Inter, sans-serif; letter-spacing: -.1px; color: #f2f2f2; border-bottom: 1px solid #333; }
.more { font-size: 16px; line-height: 14px; margin-top: -2px; }

.apphead { height: 45px; display: flex; align-items: flex-start; background: linear-gradient(#484848, #2c2e2d); border-top: 1px solid #5a5a5a; border-bottom: 1px solid #606060; color: #ccc; }
.brand { width: 231px; height: 42px; border-right: 1px solid #575757; display: flex; padding: 2px 0 0 6px; }
.name { font: 900 26px/28px Lato, sans-serif; letter-spacing: 1.500px; color: #eee; padding: 10px 0 0 3px; }
.name b { color: #fb0389; font-weight: 900; }
.burger { margin: 15px 0 0 10px; }
.apphead h1 { margin: 11px 0 0 25px; width: 759px; font: 300 16px/20px Lato, sans-serif; color: #dcdcdc; }
.monitor { margin-top: 9px; }
.upgrade { margin: 7px 0 0 19px; width: 98px; height: 24px; border-radius: 4px; background: linear-gradient(#6cc832, #48a81e); display: flex; align-items: center; gap: 6px; padding-left: 7px; font-size: 13px; font-weight: 300; color: #efffe6; }
.store { margin: 7px 0 0 20px; width: 136px; height: 28px; background: #464847; border-radius: 4px; display: flex; align-items: center; justify-content: space-between; padding: 0 9px 2px 15px; font-size: 13px; color: #bbb; }
.store span { padding-top: 3px; }
.home { margin: 14px 0 0 5px; }

.body { display: flex; height: 537px; }
aside { width: 230px; background: #2e302f; border-left: 1px solid #5a5a5a; display: flex; flex-direction: column; flex: none; color: #c9c9c9; overflow: hidden; }
.sub { height: 35px; flex: none; display: flex; align-items: center; font-size: 14px; padding-left: 14px; gap: 8px; }
.cut { height: 23px; padding-bottom: 12px; line-height: 11px; }
.sel { gap: 8px; background: linear-gradient(#f5108b, #c21f80); margin-left: -1px; padding-left: 15px; color: #e8c0d6; }
.sel strong { font-weight: 900; -webkit-text-stroke: .4px; width: 8px; }
.grp { height: 51px; flex: none; border-top: 1px solid #595959; background: linear-gradient(#484848, #2c2e2d); display: flex; align-items: center; padding: 0 15px 4px 13px; gap: 8px; color: #fff; font-size: 15px; -webkit-text-stroke: .4px #fff; }
.grp svg { margin-top: -1px; }
.grp .chev { width: 8px; height: 12px; margin-left: auto; margin-top: 0; }
.grp.iot svg:first-child { margin-top: -5px; }
.shop { gap: 8px; padding-left: 14px; }

main { width: 1136px; position: relative; background: #e6e7e6; overflow: hidden; }
.texture { position: absolute; inset: 0; width: 100%; height: 100%; }
.content { position: relative; }
.alert { margin: 22px 34px 0 35px; height: 35px; background: #dcefdb; color: #31784a; display: flex; justify-content: space-between; padding: 7px 10px 0 10px; font-size: 15px; line-height: 18px; -webkit-text-stroke: .4px #31784a; }
.alert b { font: 700 21px/17px Lato, sans-serif; color: #b3c5b2; -webkit-text-stroke: 0; }
.tabs { margin-top: -6px; position: relative; display: grid; grid-template-columns: 154px 115px 80px 95px 123px 128px; height: 40px; background: linear-gradient(#f5108b, #f5108b) 0 0 / 695px 40px no-repeat; color: #fff; font-size: 12px; }
.tabs::after { content: ""; position: absolute; left: 695px; right: 0; bottom: 0; height: 1px; background: #d7d7d7; }
.tab { display: flex; align-items: center; gap: 3px; padding: 0 0 1px 16px; -webkit-text-stroke: .4px currentColor; }
.tab svg { margin-top: -1px; }
.active { background: #fff; color: #000; border: 1px solid #ddd; padding: 0 0 2px 15px; border-bottom: 0; }
.pin { gap: 6px; } .out { gap: 4px; }
.actions { display: flex; margin: 25px 0 0 442px; gap: 4px; height: 28px; }
.refresh { width: 34px; background: #fafafa; display: flex; align-items: center; justify-content: center; padding-top: 2px; }
.add { width: 152px; background: #484848; color: #eee; display: flex; align-items: center; gap: 3px; padding-left: 8px; font-size: 14px; }
.add span { padding-bottom: 1px; } .add svg { margin-top: 1px; }
.panel { margin: 20px 0 0 35px; width: 597px; height: 285px; border: 2px solid #fb0389; background: #fff; }
.panel h2 { margin: 0; height: 46px; background: #fb0389; color: #fff; display: flex; align-items: center; gap: 15px; padding: 0 0 4px 30px; font: 20px "Liberation Sans", sans-serif; }
.tools { display: flex; justify-content: space-between; padding: 20px 35px 0 39px; height: 49px; }
.toggle { width: 100px; height: 26px; border: 2px solid #05bf50; padding: 1px; display: flex; align-items: center; gap: 6px; color: #05bf50; font: bold 13px "Liberation Serif", serif; }
.toggle div { width: 30px; height: 20px; background: #05bf50; display: flex; padding: 3px 0 0 8px; }
.search { display: flex; font-size: 13px; color: #333; -webkit-text-stroke: .3px #333; line-height: 25px; }
.box { width: 133px; height: 24px; border: 1px solid #c8c8c8; background: #fff; }
.table { margin-left: 35px; width: 522px; display: grid; grid-template-columns: 310px 210px; border: 1px solid #ddd; border-bottom: 0; font-size: 13px; color: #444; }
.th { height: 36px; border-bottom: 2px solid #dcdcdc; background: #eee; -webkit-text-stroke: .35px #333; color: #333; line-height: 35px; }
.reason { background: #d3e1e8; display: flex; align-items: center; padding: 0 16px 0 125px; justify-content: space-between; }
.ctl { border-left: 1px solid #ddd; padding-left: 8px; }
.td { height: 43px; border-bottom: 1px solid #ddd; padding: 9px 8px; line-height: 16px; }
.btns { display: flex; gap: 3px; padding: 8px; border-left: 1px solid #ddd; }
.btns i { width: 26px; height: 26px; display: flex; align-items: center; justify-content: center; background: #fb0389; }
.btns .del { width: 25px; background: #ff4136; }
footer { margin-top: 46px; padding-left: 314px; font-size: 13px; line-height: 16px; color: #444; }
.chat { position: absolute; right: 10px; bottom: 10px; width: 60px; height: 60px; border-radius: 50%; background: #fb0389; display: flex; align-items: center; justify-content: center; padding-top: 4px; }

.desktop { flex: 1; position: relative; }
.dock { position: relative; margin-left: 308px; width: 750px; height: 53px; background: #1b2a29; border: 1px solid #4a5655; border-bottom: 0; border-radius: 5px 5px 0 0; display: grid; grid-template-columns: repeat(11, 44px) 20px repeat(3, 44px) 20px 44px 44px; padding-left: 2px; justify-items: center; align-items: start; }
.app { width: 40px; height: 52px; padding-top: 4px; position: relative; }
.app svg { width: 40px; height: 40px; }
.run::after { content: ""; position: absolute; left: 18px; top: 46px; width: 4px; height: 4px; border-radius: 50%; background: #aab2b1; }
.settings b { position: absolute; right: -3px; top: 3px; width: 16px; height: 16px; border-radius: 50%; background: #f5333f; color: #fff; font: 10px/16px Inter, sans-serif; text-align: center; }
.app strong { position: absolute; left: 0; width: 40px; top: 11px; text-align: center; font: 700 23px/26px Lato, sans-serif; color: #fff; }
.dsep { width: 1px; height: 38px; margin-top: 6px; background: #4c5958; }
```
